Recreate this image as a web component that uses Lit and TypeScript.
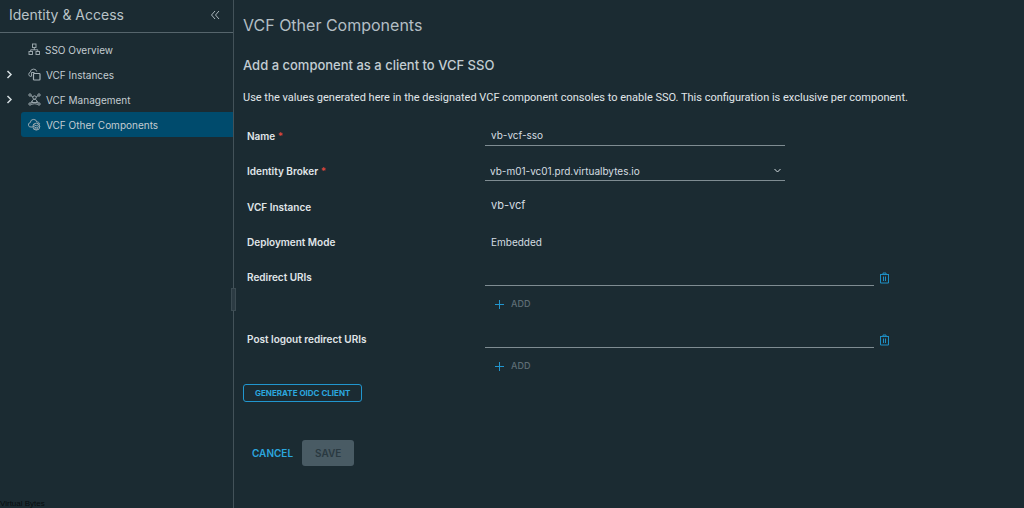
import { LitElement, html, svg, css } from "lit";
import { customElement, state } from "lit/decorators.js";

const icons = {
  tree: svg`<rect x="4.500" y="1" width="3.500" height="3.500"/><rect x="1" y="8.500" width="3.500" height="3"/><rect x="8" y="8.500" width="3.500" height="3"/><path d="M6.300 4.500v2.300M2.700 8.500V6.800h7.100v1.700"/>`,
  instances: svg`<path d="M3.500 8.500H3a2.200 2.200 0 0 1-.7-4.300A3.300 3.300 0 0 1 8.800 3.600M3.500 8V4.500h3"/><rect x="5.500" y="5.500" width="6.500" height="6.500" rx=".8" stroke-width="1.200"/>`,
  mesh: svg`<circle cx="2" cy="2" r="1.200"/><circle cx="11" cy="2" r="1.200"/><circle cx="2" cy="11" r="1.200"/><circle cx="11" cy="11" r="1.200"/><circle cx="6.500" cy="4.500" r="1.700"/><path d="M3.800 9.500c0-4.200 5.400-4.200 5.400 0zM3 2.700l2 1.500M10 2.700 8 4.200M2.800 10l1.500-2M10.200 10 8.700 8M3.500 11.500c1.500-1 4.500-1 6 0"/>`,
  others: svg`<path d="M4.500 9H3a2.200 2.200 0 0 1-.7-4.400A3.300 3.300 0 0 1 8.800 3.900c1.500 0 2.600.8 3 2"/><circle cx="8.300" cy="8.600" r="3.500"/><path d="M5 8.200l3.300 1.700 3.400-1.700M5.500 6.500l2.800 1.300 2.800-1.300M6.500 10.500l1.800.8 1.800-.8"/>`,
};

@customElement("app-root")
export class AppRoot extends LitElement {
  @state() private items = [
    { icon: icons.tree, label: "SSO Overview", group: false, size: 12 },
    { icon: icons.instances, label: "VCF Instances", group: true, size: 13 },
    { icon: icons.mesh, label: "VCF Management", group: true, size: 13 },
    { icon: icons.others, label: "VCF Other Components", group: false, size: 13, active: true },
  ];

  static styles = css`
    :host {
      display: flex;
      flex-direction: column;
      min-height: 100vh;
      position: relative;
      overflow: hidden;
      background: #1b2b32;
      color: #d5dde1;
      font: 10px/16px Inter, "Open Sans", sans-serif;
    }
    * { box-sizing: border-box; }
    svg { fill: none; stroke: currentColor; flex: none; }
    button, input, select { font: inherit; color: inherit; background: none; border: 0; padding: 0; margin: 0; outline: none; }
    button { cursor: pointer; }
    h1, h2, p { margin: 0; font-weight: 400; }
    .shell { display: flex; flex: 1; }
    .side { width: 234px; flex: none; border-right: 1px solid #435259; position: relative; }
    .grip { position: absolute; right: -3px; top: 288px; width: 5px; height: 23px; border: 1px solid #3c4b52; background: #2c3b43; }
    .head { height: 33px; padding: 0 13px 2px 9px; display: flex; align-items: center; justify-content: space-between; border-bottom: 1px solid #56656c; }
    .brand { font-size: 14px; line-height: 20px; color: #b9c3c8; }
    .collapse { display: flex; color: #aab6bc; }
    .nav { padding-top: 4px; }
    .item { display: flex; align-items: center; height: 25px; }
    .toggle { width: 21px; display: flex; padding-left: 6px; }
    .link { flex: 1; height: 25px; display: flex; align-items: center; gap: 5px; padding-left: 7px; color: #c3ccd1; text-decoration: none; border-radius: 3px 0 0 3px; }
    .link svg { color: #a5b1b7; }
    .active { background: #004b6d; }
    .main { flex: 1; min-width: 0; padding: 13px 9px 24px; }
    .title { font-size: 16px; line-height: 24px; color: #b3bec4; }
    .subtitle { font-size: 13px; line-height: 20px; margin-top: 18px; font-weight: 500; color: #c3cdd2; }
    .lead { font: 11px/16px Roboto, sans-serif; margin-top: 15px; color: #e0e6e9; }
    .form { padding: 14px 0 0 4px; }
    .row { display: grid; grid-template-columns: 238px minmax(0, 1fr); min-height: 35px; }
    .name { font-weight: 600; line-height: 16px; padding-top: 8px; color: #e0e6e9; }
    .req { color: #d9453c; }
    .field { height: 26px; width: 100%; max-width: 300px; border-bottom: 1px solid #7f8c92; }
    .text { padding: 5px 6px 0; }
    .select { position: relative; }
    .select select { appearance: none; width: 100%; height: 25px; padding: 6px 5px 0; }
    .chevron { position: absolute; right: 3px; top: 11px; pointer-events: none; }
    .static .name, .uri .name { padding-top: 9px; }
    .value { padding: 9px 6px 0; }
    .big { font-size: 11px; padding-top: 7px; }
    .uri { min-height: 62px; }
    .line { display: flex; align-items: center; gap: 5px; }
    .line .field { max-width: 389px; }
    .trash { display: flex; color: #1e8fc4; padding-top: 9px; }
    .add { display: flex; align-items: center; gap: 7px; margin: 10px 0 0 9px; font-size: 9px; font-weight: 500; color: #5f6e76; }
    .add svg { color: #2196cf; }
    .generate { height: 18px; padding: 0 11px; border: 1px solid #2196cf; border-radius: 3px; font-size: 8px; line-height: 16px; font-weight: 700; color: #2ba6de; display: block; }
    .actions { display: flex; align-items: center; gap: 9px; margin-top: 38px; padding-left: 9px; font-weight: 600; }
    .cancel { color: #2ba6de; }
    .save { height: 26px; padding: 0 13px; border-radius: 3px; background: #495b64; color: #2a3941; }
    .foot { position: absolute; left: 0; bottom: 0; height: 9px; overflow: hidden; font: 8px/10px "Liberation Sans", sans-serif; color: #060b0e; }
  `;

  private uri(id: string, label: string) {
    return html`<div class="row uri">
      <label class="name" for=${id}>${label}</label>
      <div>
        <div class="line">
          <input class="field text" id=${id} />
          <button class="trash" type="button" aria-label="Delete">
            <svg width="11" height="12" viewBox="0 0 11 12"><path d="M1 2.500h9M4 2.500V1h3v1.500M1.500 2.500v8.500h8V2.500M4.500 4.500v4.500M6.500 4.500v4.500"/></svg>
          </button>
        </div>
        <button class="add" type="button"><svg width="10" height="10" viewBox="0 0 10 10"><path d="M5.500 1v9M1 5.500h9"/></svg>ADD</button>
      </div>
    </div>`;
  }

  render() {
    return html`
      <div class="shell">
        <aside class="side">
          <div class="head">
            <span class="brand">Identity &amp; Access</span>
            <button class="collapse" aria-label="Collapse"><svg width="10" height="10" viewBox="0 0 10 10"><path d="M5 1 1.500 5 5 9M9 1 5.500 5 9 9"/></svg></button>
          </div>
          <nav class="nav">
            ${this.items.map((i) => html`<div class="item">
              <span class="toggle">${i.group ? html`<button aria-label="Expand ${i.label}"><svg width="7" height="9" viewBox="0 0 7 9" stroke-width="1.500"><path d="M1.500 1 5 4.500 1.500 8"/></svg></button>` : ""}</span>
              <a class="link ${i.active ? "active" : ""}" href="#"><svg width=${i.size} height="13" viewBox="0 0 ${i.size} 13" stroke-width=".9">${i.icon}</svg>${i.label}</a>
            </div>`)}
          </nav>
          <span class="grip"></span>
        </aside>
        <main class="main">
          <h1 class="title">VCF Other Components</h1>
          <h2 class="subtitle">Add a component as a client to VCF SSO</h2>
          <p class="lead">Use the values generated here in the designated VCF component consoles to enable SSO. This configuration is exclusive per component.</p>
          <form class="form">
            <div class="row"><label class="name" for="name">Name <span class="req">*</span></label><input class="field text" id="name" value="vb-vcf-sso" /></div>
            <div class="row"><label class="name" for="broker">Identity Broker <span class="req">*</span></label>
              <div class="field select"><select id="broker"><option>vb-m01-vc01.prd.virtualbytes.io</option></select>
                <svg class="chevron" width="9" height="9" viewBox="0 0 9 9"><path d="M1.500 3 4.500 6 7.500 3"/></svg></div></div>
            <div class="row static"><span class="name">VCF Instance</span><span class="value big">vb-vcf</span></div>
            <div class="row static"><span class="name">Deployment Mode</span><span class="value">Embedded</span></div>
            ${this.uri("redirect", "Redirect URIs")}
            ${this.uri("logout", "Post logout redirect URIs")}
          </form>
          <button class="generate" type="button">GENERATE OIDC CLIENT</button>
          <div class="actions"><button class="cancel" type="button">CANCEL</button><button class="save" type="button" disabled>SAVE</button></div>
        </main>
      </div>
      <footer class="foot">Virtual Bytes</footer>
    `;
  }
}
